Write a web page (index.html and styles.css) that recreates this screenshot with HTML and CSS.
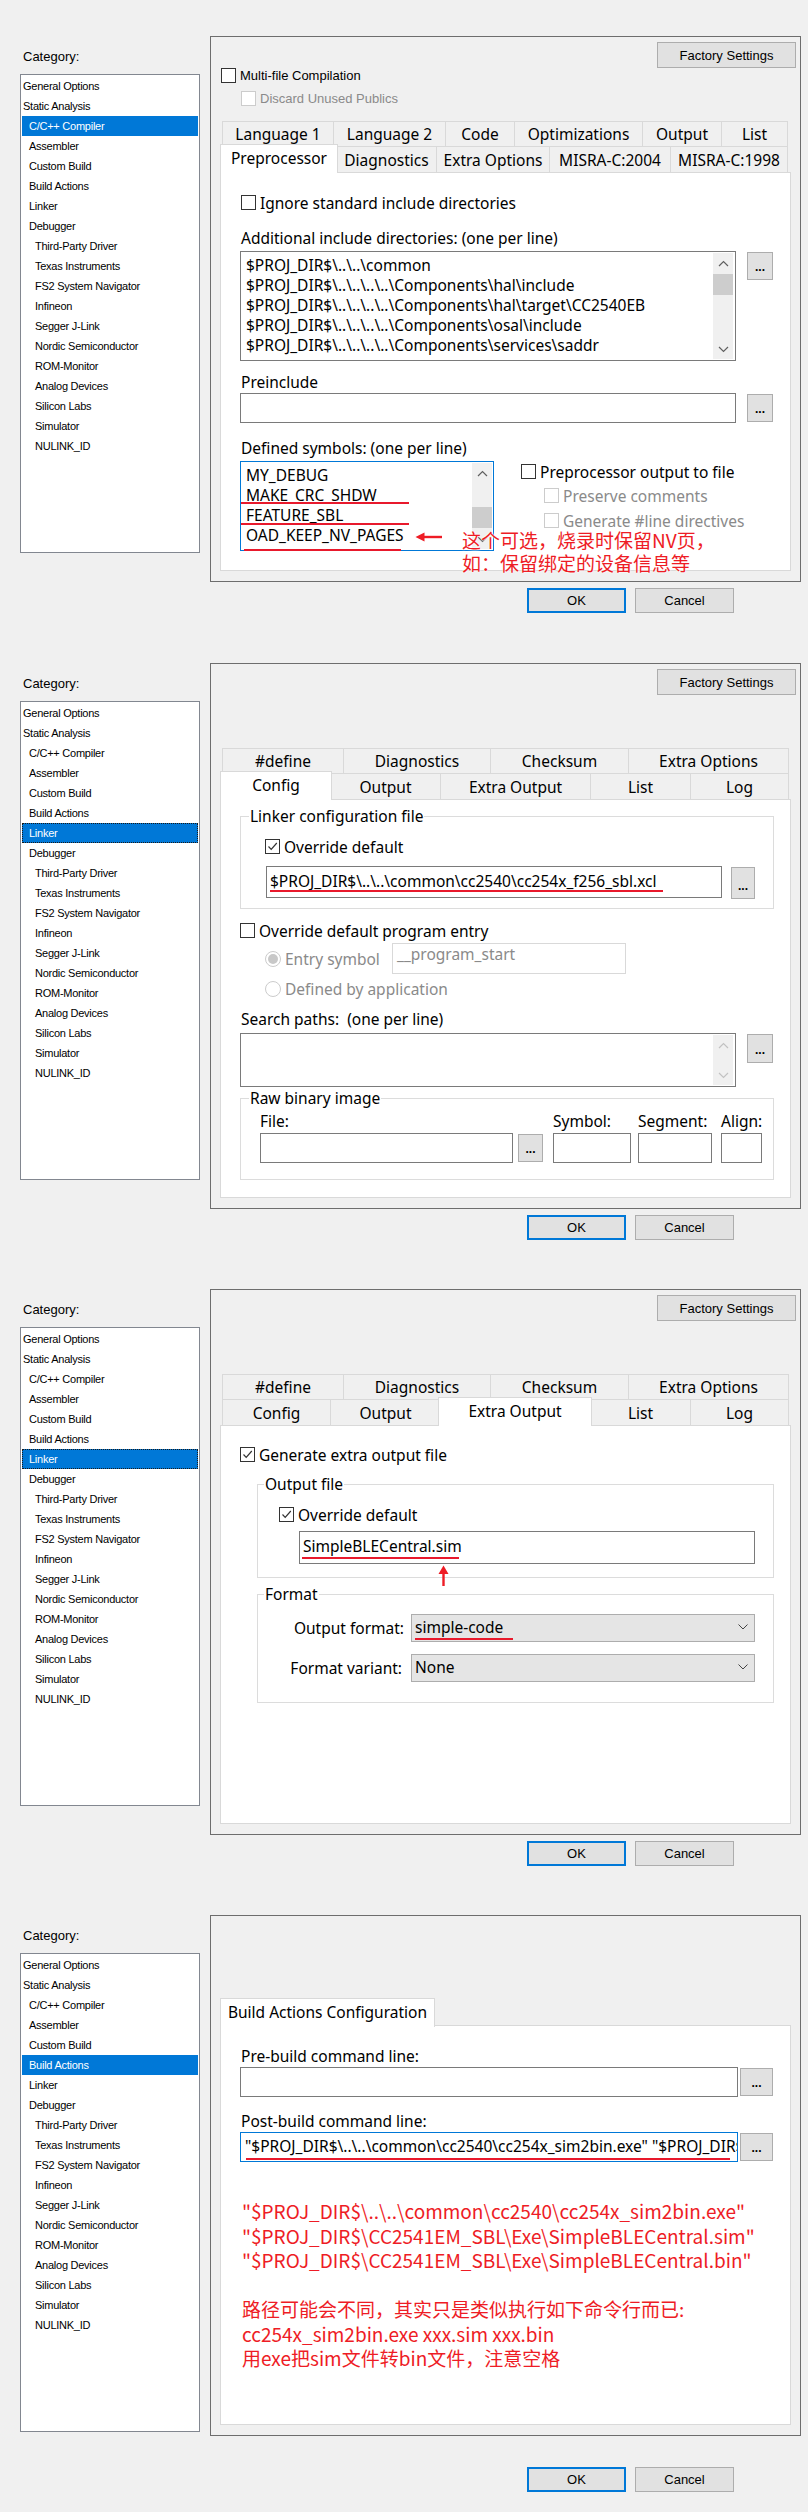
FILE: index.html
```html
<!DOCTYPE html>
<html>
<head>
<meta charset="utf-8">
<title>Options</title>
<link rel="stylesheet" href="styles.css">
</head>
<body>

<!-- Panel 1: C/C++ Compiler / Preprocessor -->
<section class="dlg d1">
  <aside class="cat">
    <div class="cat-label">Category:</div>
    <ul class="cat-list">
      <li class="l0">General Options</li>
      <li class="l0">Static Analysis</li>
      <li class="l1 on">C/C++ Compiler</li>
      <li class="l1">Assembler</li>
      <li class="l1">Custom Build</li>
      <li class="l1">Build Actions</li>
      <li class="l1">Linker</li>
      <li class="l1">Debugger</li>
      <li class="l2">Third-Party Driver</li>
      <li class="l2">Texas Instruments</li>
      <li class="l2">FS2 System Navigator</li>
      <li class="l2">Infineon</li>
      <li class="l2">Segger J-Link</li>
      <li class="l2">Nordic Semiconductor</li>
      <li class="l2">ROM-Monitor</li>
      <li class="l2">Analog Devices</li>
      <li class="l2">Silicon Labs</li>
      <li class="l2">Simulator</li>
      <li class="l2">NULINK_ID</li>
    </ul>
  </aside>
  <div class="main">
    <div class="frame">
      <div class="ftop"><div class="btn fs">Factory Settings</div></div>
      <div class="cbw multi"><span class="cb"></span><span>Multi-file Compilation</span></div>
      <div class="cbw discard dis"><span class="cb"></span><span>Discard Unused Publics</span></div>
      <div class="tabs tabs1">
        <div class="tabrow">
          <div class="tab w111">Language 1</div>
          <div class="tab w112">Language 2</div>
          <div class="tab w69">Code</div>
          <div class="tab w128">Optimizations</div>
          <div class="tab w79">Output</div>
          <div class="tab w67 end">List</div>
        </div>
        <div class="tabrow front">
          <div class="tab w118 sel">Preprocessor</div>
          <div class="tab w100">Diagnostics</div>
          <div class="tab w113">Extra Options</div>
          <div class="tab w121">MISRA-C:2004</div>
          <div class="tab w118 end">MISRA-C:1998</div>
        </div>
      </div>
      <div class="pane">
        <div class="cbrow ign"><span class="cb"></span><span>Ignore standard include directories</span></div>
        <div class="lbl lbl-inc">Additional include directories: (one per line)</div>
        <div class="frow inc">
          <div class="ta ta-inc">
            <div class="lines">
              <div>$PROJ_DIR$\..\..\common</div>
              <div>$PROJ_DIR$\..\..\..\..\Components\hal\include</div>
              <div>$PROJ_DIR$\..\..\..\..\Components\hal\target\CC2540EB</div>
              <div>$PROJ_DIR$\..\..\..\..\Components\osal\include</div>
              <div>$PROJ_DIR$\..\..\..\..\Components\services\saddr</div>
            </div>
            <div class="vs">
              <div class="ar"><svg width="11" height="7" viewBox="0 0 11 7"><path d="M1 6L5.5 1.5L10 6" fill="none" stroke="#606060" stroke-width="1.2"/></svg></div>
              <div class="th"></div>
              <div class="ar dn"><svg width="11" height="7" viewBox="0 0 11 7"><path d="M1 1L5.5 5.5L10 1" fill="none" stroke="#606060" stroke-width="1.2"/></svg></div>
            </div>
          </div>
          <div class="btn dots d-inc">...</div>
        </div>
        <div class="lbl lbl-pre">Preinclude</div>
        <div class="frow pre">
          <div class="inp inp-pre"></div>
          <div class="btn dots d-pre">...</div>
        </div>
        <div class="lbl lbl-def">Defined symbols: (one per line)</div>
        <div class="defrow">
          <div class="ta ta-def">
            <div class="lines">
              <div>MY_DEBUG</div>
              <div>MAKE_CRC_SHDW</div>
              <div>FEATURE_SBL</div>
              <div>OAD_KEEP_NV_PAGES</div>
            </div>
            <div class="vs v-def">
              <div class="ar"><svg width="11" height="7" viewBox="0 0 11 7"><path d="M1 6L5.5 1.5L10 6" fill="none" stroke="#606060" stroke-width="1.2"/></svg></div>
              <div class="th"></div>
              <div class="ar dn"><svg width="11" height="7" viewBox="0 0 11 7"><path d="M1 1L5.5 5.5L10 1" fill="none" stroke="#606060" stroke-width="1.2"/></svg></div>
            </div>
          </div>
          <div class="ppo">
            <div class="cbrow"><span class="cb"></span><span>Preprocessor output to file</span></div>
            <div class="cbrow sub dis s1"><span class="cb"></span><span>Preserve comments</span></div>
            <div class="cbrow sub dis s2"><span class="cb"></span><span>Generate #line directives</span></div>
          </div>
        </div>
        <span class="mark m1"></span>
        <span class="mark m2"></span>
        <span class="mark m3"></span>
        <svg class="arrow-l" width="28" height="12" viewBox="0 0 28 12"><path d="M27 6H7" stroke="#ee1c25" stroke-width="2.4"/><path d="M0.5 6L9.5 1.5V10.5Z" fill="#ee1c25"/></svg>
        <div class="note">这个可选，烧录时保留NV页，<br>如：保留绑定的设备信息等</div>
      </div>
    </div>
    <div class="okrow"><div class="btn ok">OK</div><div class="btn">Cancel</div></div>
  </div>
</section>

<!-- Panel 2: Linker / Config -->
<section class="dlg d2">
  <aside class="cat">
    <div class="cat-label">Category:</div>
    <ul class="cat-list">
      <li class="l0">General Options</li>
      <li class="l0">Static Analysis</li>
      <li class="l1">C/C++ Compiler</li>
      <li class="l1">Assembler</li>
      <li class="l1">Custom Build</li>
      <li class="l1">Build Actions</li>
      <li class="l1 on focus">Linker</li>
      <li class="l1">Debugger</li>
      <li class="l2">Third-Party Driver</li>
      <li class="l2">Texas Instruments</li>
      <li class="l2">FS2 System Navigator</li>
      <li class="l2">Infineon</li>
      <li class="l2">Segger J-Link</li>
      <li class="l2">Nordic Semiconductor</li>
      <li class="l2">ROM-Monitor</li>
      <li class="l2">Analog Devices</li>
      <li class="l2">Silicon Labs</li>
      <li class="l2">Simulator</li>
      <li class="l2">NULINK_ID</li>
    </ul>
  </aside>
  <div class="main">
    <div class="frame">
      <div class="ftop"><div class="btn fs">Factory Settings</div></div>
      <div class="tabs tabs2">
        <div class="tabrow">
          <div class="tab w121">#define</div>
          <div class="tab w147">Diagnostics</div>
          <div class="tab w138">Checksum</div>
          <div class="tab w161 end">Extra Options</div>
        </div>
        <div class="tabrow front">
          <div class="tab w112 sel">Config</div>
          <div class="tab w110">Output</div>
          <div class="tab w150">Extra Output</div>
          <div class="tab w100">List</div>
          <div class="tab w99 end">Log</div>
        </div>
      </div>
      <div class="pane">
        <div class="grp g-lcf">
          <div class="legend">Linker configuration file</div>
          <div class="cbrow ovr1"><span class="cb"><svg width="13" height="13" viewBox="0 0 13 13"><path d="M2.5 6.5L5.2 9.3L10.8 3" fill="none" stroke="#333" stroke-width="1.2"/></svg></span><span>Override default</span></div>
          <div class="frow f-lcf">
            <div class="inp inp-lcf">$PROJ_DIR$\..\..\common\cc2540\cc254x_f256_sbl.xcl<span class="mark u-lcf"></span></div>
            <div class="btn dots d-lcf">...</div>
          </div>
        </div>
        <div class="cbrow pe"><span class="cb"></span><span>Override default program entry</span></div>
        <div class="rrow r-entry dis"><span class="rad on"></span><span class="rlab">Entry symbol</span><div class="inp inp-entry">__program_start</div></div>
        <div class="rrow r-app dis"><span class="rad"></span><span>Defined by application</span></div>
        <div class="lbl lbl-sp">Search paths:&nbsp; (one per line)</div>
        <div class="frow sp">
          <div class="ta ta-sp">
            <div class="lines"></div>
            <div class="vs">
              <div class="ar"><svg width="11" height="7" viewBox="0 0 11 7"><path d="M1 6L5.5 1.5L10 6" fill="none" stroke="#c2c2c2" stroke-width="1.2"/></svg></div>
              <div class="ar dn"><svg width="11" height="7" viewBox="0 0 11 7"><path d="M1 1L5.5 5.5L10 1" fill="none" stroke="#c2c2c2" stroke-width="1.2"/></svg></div>
            </div>
          </div>
          <div class="btn dots d-sp">...</div>
        </div>
        <div class="grp g-raw">
          <div class="legend">Raw binary image</div>
          <div class="rawl">
            <span class="c1">File:</span><span class="c2"></span><span class="c3">Symbol:</span><span class="c4">Segment:</span><span class="c5">Align:</span>
          </div>
          <div class="rawi">
            <div class="inp c1"></div>
            <div class="btn dots c2">...</div>
            <div class="inp c3"></div>
            <div class="inp c4"></div>
            <div class="inp c5"></div>
          </div>
        </div>
      </div>
    </div>
    <div class="okrow"><div class="btn ok">OK</div><div class="btn">Cancel</div></div>
  </div>
</section>

<!-- Panel 3: Linker / Extra Output -->
<section class="dlg d3">
  <aside class="cat">
    <div class="cat-label">Category:</div>
    <ul class="cat-list">
      <li class="l0">General Options</li>
      <li class="l0">Static Analysis</li>
      <li class="l1">C/C++ Compiler</li>
      <li class="l1">Assembler</li>
      <li class="l1">Custom Build</li>
      <li class="l1">Build Actions</li>
      <li class="l1 on focus">Linker</li>
      <li class="l1">Debugger</li>
      <li class="l2">Third-Party Driver</li>
      <li class="l2">Texas Instruments</li>
      <li class="l2">FS2 System Navigator</li>
      <li class="l2">Infineon</li>
      <li class="l2">Segger J-Link</li>
      <li class="l2">Nordic Semiconductor</li>
      <li class="l2">ROM-Monitor</li>
      <li class="l2">Analog Devices</li>
      <li class="l2">Silicon Labs</li>
      <li class="l2">Simulator</li>
      <li class="l2">NULINK_ID</li>
    </ul>
  </aside>
  <div class="main">
    <div class="frame">
      <div class="ftop"><div class="btn fs">Factory Settings</div></div>
      <div class="tabs tabs2">
        <div class="tabrow">
          <div class="tab w121">#define</div>
          <div class="tab w147">Diagnostics</div>
          <div class="tab w138">Checksum</div>
          <div class="tab w161 end">Extra Options</div>
        </div>
        <div class="tabrow front">
          <div class="tab w108">Config</div>
          <div class="tab w110">Output</div>
          <div class="tab w154 sel">Extra Output</div>
          <div class="tab w100">List</div>
          <div class="tab w99 end">Log</div>
        </div>
      </div>
      <div class="pane">
        <div class="cbrow gen"><span class="cb"><svg width="13" height="13" viewBox="0 0 13 13"><path d="M2.5 6.5L5.2 9.3L10.8 3" fill="none" stroke="#333" stroke-width="1.2"/></svg></span><span>Generate extra output file</span></div>
        <div class="grp g-of">
          <div class="legend">Output file</div>
          <div class="cbrow ovr3"><span class="cb"><svg width="13" height="13" viewBox="0 0 13 13"><path d="M2.5 6.5L5.2 9.3L10.8 3" fill="none" stroke="#333" stroke-width="1.2"/></svg></span><span>Override default</span></div>
          <div class="inp inp-of">SimpleBLECentral.sim<span class="mark u-of"></span></div>
        </div>
        <div class="grp g-fmt">
          <div class="legend">Format</div>
          <div class="frow2 fr1">
            <span class="flab">Output format:</span>
            <div class="sbox">simple-code<svg width="10" height="6" viewBox="0 0 10 6"><path d="M0.5 0.5L5 5L9.5 0.5" fill="none" stroke="#444" stroke-width="1"/></svg><span class="mark u-fmt"></span></div>
          </div>
          <div class="frow2 fr2">
            <span class="flab">Format variant:</span>
            <div class="sbox">None<svg width="10" height="6" viewBox="0 0 10 6"><path d="M0.5 0.5L5 5L9.5 0.5" fill="none" stroke="#444" stroke-width="1"/></svg></div>
          </div>
        </div>
        <svg class="arrow-u" width="13" height="22" viewBox="0 0 13 22"><path d="M6.5 21V7" stroke="#ee1c25" stroke-width="2.4"/><path d="M6.5 0.5L11.5 9H1.5Z" fill="#ee1c25"/></svg>
      </div>
    </div>
    <div class="okrow"><div class="btn ok">OK</div><div class="btn">Cancel</div></div>
  </div>
</section>

<!-- Panel 4: Build Actions -->
<section class="dlg d4">
  <aside class="cat">
    <div class="cat-label">Category:</div>
    <ul class="cat-list">
      <li class="l0">General Options</li>
      <li class="l0">Static Analysis</li>
      <li class="l1">C/C++ Compiler</li>
      <li class="l1">Assembler</li>
      <li class="l1">Custom Build</li>
      <li class="l1 on">Build Actions</li>
      <li class="l1">Linker</li>
      <li class="l1">Debugger</li>
      <li class="l2">Third-Party Driver</li>
      <li class="l2">Texas Instruments</li>
      <li class="l2">FS2 System Navigator</li>
      <li class="l2">Infineon</li>
      <li class="l2">Segger J-Link</li>
      <li class="l2">Nordic Semiconductor</li>
      <li class="l2">ROM-Monitor</li>
      <li class="l2">Analog Devices</li>
      <li class="l2">Silicon Labs</li>
      <li class="l2">Simulator</li>
      <li class="l2">NULINK_ID</li>
    </ul>
  </aside>
  <div class="main">
    <div class="frame f4">
      <div class="tabs tabs4">
        <div class="tabrow">
          <div class="tab w215 sel">Build Actions Configuration</div>
        </div>
      </div>
      <div class="pane p4">
        <div class="lbl lbl-pb">Pre-build command line:</div>
        <div class="frow pb">
          <div class="inp inp-pb"></div>
          <div class="btn dots d-pb">...</div>
        </div>
        <div class="lbl lbl-post">Post-build command line:</div>
        <div class="frow pb">
          <div class="inp inp-pb inp-post"><span class="clip">"$PROJ_DIR$\..\..\common\cc2540\cc254x_sim2bin.exe" "$PROJ_DIR$\CC2541EM_SBL\Exe\SimpleBLECentral.sim"</span><span class="mark u-post"></span></div>
          <div class="btn dots d-pb">...</div>
        </div>
        <div class="redtxt">
          <div>"$PROJ_DIR$\..\..\common\cc2540\cc254x_sim2bin.exe"</div>
          <div>"$PROJ_DIR$\CC2541EM_SBL\Exe\SimpleBLECentral.sim"</div>
          <div>"$PROJ_DIR$\CC2541EM_SBL\Exe\SimpleBLECentral.bin"</div>
          <div>&nbsp;</div>
          <div>路径可能会不同，其实只是类似执行如下命令行而已:</div>
          <div>cc254x_sim2bin.exe xxx.sim xxx.bin</div>
          <div>用exe把sim文件转bin文件，注意空格</div>
        </div>
      </div>
    </div>
    <div class="okrow o4"><div class="btn ok">OK</div><div class="btn">Cancel</div></div>
  </div>
</section>

</body>
</html>
```

FILE: styles.css
```css
* { box-sizing: border-box; margin: 0; padding: 0; }
html, body { background: #f0f0f0; }
body { margin: 0; width: 808px; font-family: "Liberation Sans", Arial, sans-serif; color: #000; }

/* dialog panels */
.dlg { display: grid; grid-template-columns: 180px 591px; column-gap: 10px; padding-left: 20px; align-items: start; overflow: hidden; }
.d1 { height: 627px; }
.d2 { height: 626px; }
.d3 { height: 626px; }
.d4 { height: 633px; }

/* category list */
.cat { padding-top: 49px; }
.cat-label { font-size: 13px; line-height: 16px; height: 16px; margin-left: 3px; margin-bottom: 9px; }
.cat-list { list-style: none; height: 479px; border: 1px solid #828790; background: #fff; padding: 1px 1px 0; }
.cat-list li { height: 20px; line-height: 20px; font-size: 11px; letter-spacing: -0.25px; white-space: nowrap; }
.l0 { padding-left: 1px; }
.l1 { padding-left: 7px; }
.l2 { padding-left: 13px; }
.cat-list li.on { background: #0078d7; color: #fff; }
.cat-list li.focus { outline: 1px dotted #1a1a1a; outline-offset: -1px; }

/* right side */
.main { padding-top: 36px; }
.frame { height: 546px; border: 1px solid #6d6d6d; padding: 0 9px; display: flex; flex-direction: column; }
.frame.f4 { height: 521px; }
.ftop { display: flex; justify-content: flex-end; margin: 5px -5px 0 0; height: 26px; }

.btn { background: #e1e1e1; border: 1px solid #adadad; font-family: "Liberation Sans", Arial, sans-serif; font-size: 13px; color: #000; display: flex; align-items: center; justify-content: center; flex: none; }
.fs { width: 139px; height: 26px; }

.cbw { display: flex; align-items: center; height: 15px; font-size: 13px; gap: 4px; white-space: nowrap; }
.multi { margin-left: 1px; }
.discard { margin-left: 21px; margin-top: 8px; }

.cb { flex: none; width: 15px; height: 15px; border: 1px solid #333; background: #fff; display: flex; align-items: center; justify-content: center; }
.dis { color: #8a8a8a; }
.dis .cb { border-color: #cccccc; }

/* tabs */
.tabs1 { margin-top: 15px; }
.tabs2 { margin-top: 53px; }
.tabs4 { margin-top: 84px; }
.tabrow { display: flex; margin-left: 2px; height: 25px; }
.tabrow.front { height: 26px; }
.tab { flex: none; border: 1px solid #d9d9d9; border-right: 0; border-bottom: 0; background: #f0f0f0; font-family: "Noto Sans", sans-serif; font-size: 15.5px; line-height: 20px; display: flex; align-items: center; justify-content: center; white-space: nowrap; }
.tab.end { border-right: 1px solid #d9d9d9; }
.tab.sel { background: #fff; border-right: 1px solid #d9d9d9; height: 29px; margin: -2px -2px -1px; position: relative; z-index: 2; padding-bottom: 3px; }
.w67 { width: 67px; } .w69 { width: 69px; } .w79 { width: 79px; } .w99 { width: 99px; } .w100 { width: 100px; }
.w108 { width: 108px; } .w110 { width: 110px; } .w111 { width: 111px; } .w112 { width: 112px; } .w113 { width: 113px; }
.w118 { width: 118px; } .w121 { width: 121px; } .w128 { width: 128px; } .w138 { width: 138px; } .w147 { width: 147px; }
.w150 { width: 150px; } .w154 { width: 154px; } .w161 { width: 161px; } .w215 { width: 215px; }

/* page pane */
.pane { height: 399px; border: 1px solid #d9d9d9; background: #fff; position: relative; padding-left: 19px; display: flex; flex-direction: column; align-items: flex-start; font-family: "Noto Sans", sans-serif; font-size: 15.5px; line-height: 20px; }
.pane.p4 { height: 400px; }

.cbrow { display: flex; align-items: center; height: 15px; gap: 4px; white-space: nowrap; }
.lbl { height: 20px; line-height: 20px; margin-left: 1px; white-space: nowrap; }
.frow { display: flex; align-items: flex-start; }

.ta { display: flex; border: 1px solid #7a7a7a; background: #fff; overflow: hidden; flex: none; }
.lines { flex: 1; min-width: 0; padding: 3px 0 0 5px; overflow: hidden; white-space: nowrap; }
.lines div { height: 20px; line-height: 20px; }
.vs { flex: none; width: 20px; margin: 1px 2px 1px 0; background: #f0f0f0; display: flex; flex-direction: column; }
.vs .ar { height: 20px; flex: none; display: flex; align-items: center; justify-content: center; }
.vs .dn { margin-top: auto; }
.vs .th { height: 21px; flex: none; background: #cdcdcd; margin-top: 1px; }

.dots { font-size: 12px; font-weight: bold; align-items: flex-end; padding-bottom: 6px; line-height: 12px; }

.inp { border: 1px solid #7a7a7a; background: #fff; height: 30px; position: relative; white-space: nowrap; overflow: hidden; display: flex; align-items: center; padding: 0 0 3px 3px; flex: none; }
.clip { flex: 1 1 auto; min-width: 0; overflow: hidden; white-space: nowrap; }

/* panel 1 */
.ign { margin: 22px 0 0 1px; }
.lbl-inc { margin-top: 18px; }
.frow.inc { margin-top: 3px; }
.ta-inc { width: 496px; height: 110px; }
.d-inc { width: 26px; height: 28px; margin: 1px 0 0 11px; }
.lbl-pre { margin-top: 11px; }
.frow.pre { margin-top: 1px; }
.inp-pre { width: 496px; }
.d-pre { width: 26px; height: 28px; margin: 1px 0 0 11px; }
.lbl-def { margin-top: 15px; }
.defrow { display: flex; align-items: flex-start; margin-top: 3px; }
.ta-def { width: 254px; height: 90px; border-color: #0078d7; }
.v-def { margin-right: 1px; }
.v-def .th { margin-top: 24px; }
.ppo { margin: 3px 0 0 27px; display: flex; flex-direction: column; }
.ppo .sub { margin-left: 23px; }
.ppo .s1 { margin-top: 9px; }
.ppo .s2 { margin-top: 10px; }

.mark { position: absolute; height: 2px; background: #e8192c; }
.m1 { left: 20px; top: 329px; width: 168px; }
.m2 { left: 20px; top: 350px; width: 168px; }
.m3 { left: 23px; top: 376px; width: 157px; }
.arrow-l { position: absolute; left: 194px; top: 358px; }
.note { position: absolute; left: 241px; top: 355px; font-family: "Noto Sans CJK SC", sans-serif; font-size: 19px; line-height: 23px; color: #ee1c25; white-space: nowrap; text-shadow: 0 0 2px #fff, 0 0 2px #fff; }

/* panel 2 */
.grp { border: 1px solid #dcdcdc; display: flex; flex-direction: column; align-items: flex-start; flex: none; }
.legend { margin: -11px 0 0 8px; padding: 0 1px; background: #fff; height: 20px; line-height: 20px; white-space: nowrap; }
.g-lcf { margin-top: 16px; width: 534px; height: 93px; }
.ovr1 { margin: 13px 0 0 24px; }
.f-lcf { margin: 12px 0 0 25px; }
.inp-lcf { width: 456px; height: 32px; }
.u-lcf { left: 3px; top: 23px; width: 393px; }
.d-lcf { width: 24px; height: 32px; margin: 1px 0 0 9px; }
.pe { margin-top: 14px; }
.rrow { display: flex; align-items: center; white-space: nowrap; }
.r-entry { margin: 5px 0 0 25px; height: 31px; }
.r-app { margin: 7px 0 0 25px; height: 16px; }
.rad { flex: none; width: 16px; height: 16px; border: 1px solid #cccccc; border-radius: 50%; background: #fff; display: flex; align-items: center; justify-content: center; margin-right: 4px; }
.rad.on::after { content: ""; width: 10px; height: 10px; border-radius: 50%; background: #c8c8c8; }
.rlab { width: 107px; }
.inp-entry { width: 234px; height: 31px; border-color: #d9d9d9; color: #8a8a8a; align-items: flex-start; padding: 0 0 0 4px; }
.lbl-sp { margin-top: 12px; }
.frow.sp { margin-top: 4px; }
.ta-sp { width: 496px; height: 54px; }
.d-sp { width: 26px; height: 29px; margin: 1px 0 0 11px; }
.g-raw { margin-top: 11px; width: 534px; height: 82px; }
.rawl { display: flex; margin-top: 3px; height: 20px; line-height: 20px; white-space: nowrap; }
.rawi { display: flex; align-items: flex-start; margin-top: 2px; }
.c1 { margin-left: 19px; width: 253px; flex: none; }
.c2 { margin-left: 5px; width: 25px; flex: none; }
.c3 { margin-left: 10px; width: 78px; flex: none; }
.c4 { margin-left: 7px; width: 74px; flex: none; }
.c5 { margin-left: 9px; width: 41px; flex: none; }
.rawi .dots { height: 28px; margin-top: 1px; }

/* panel 3 */
.gen { margin-top: 21px; }
.g-of { margin: 22px 0 0 17px; width: 517px; height: 94px; }
.g-of .legend, .g-fmt .legend { margin-left: 6px; }
.ovr3 { margin: 13px 0 0 21px; }
.inp-of { margin: 9px 0 0 41px; width: 456px; height: 33px; }
.u-of { left: 2px; top: 25px; width: 157px; }
.g-fmt { margin: 16px 0 0 17px; width: 517px; height: 109px; }
.frow2 { display: flex; align-items: center; white-space: nowrap; }
.fr1 { margin-top: 10px; }
.fr2 { margin-top: 12px; }
.flab { width: 146px; text-align: right; }
.fr2 .flab { padding-right: 2px; }
.sbox { margin-left: 7px; width: 344px; height: 28px; background: #e5e5e5; border: 1px solid #adadad; display: flex; align-items: center; justify-content: space-between; padding: 0 6px 2px 3px; position: relative; }
.u-fmt { left: 3px; top: 23px; width: 98px; }
.arrow-u { position: absolute; left: 216px; top: 139px; }

/* panel 4 */
.lbl-pb { margin-top: 20px; }
.frow.pb { margin-top: 1px; }
.inp-pb { width: 498px; height: 30px; }
.inp-post { border-color: #0078d7; padding-left: 4px; }
.u-post { left: 5px; top: 25px; width: 484px; }
.d-pb { width: 33px; height: 28px; margin: 1px 0 0 2px; }
.lbl-post { margin-top: 14px; }
.redtxt { margin: 37px 0 0 2px; font-family: "Noto Sans CJK SC", sans-serif; font-size: 19px; line-height: 24.5px; color: #ee1c25; white-space: nowrap; text-shadow: 0 0 2px #fff, 0 0 2px #fff; }

/* OK / Cancel */
.okrow { display: flex; justify-content: flex-end; gap: 9px; margin-top: 6px; padding-right: 67px; }
.okrow .btn { width: 99px; height: 25px; }
.okrow .ok { border: 2px solid #0078d7; }
.okrow.o4 { margin-top: 31px; }
```
